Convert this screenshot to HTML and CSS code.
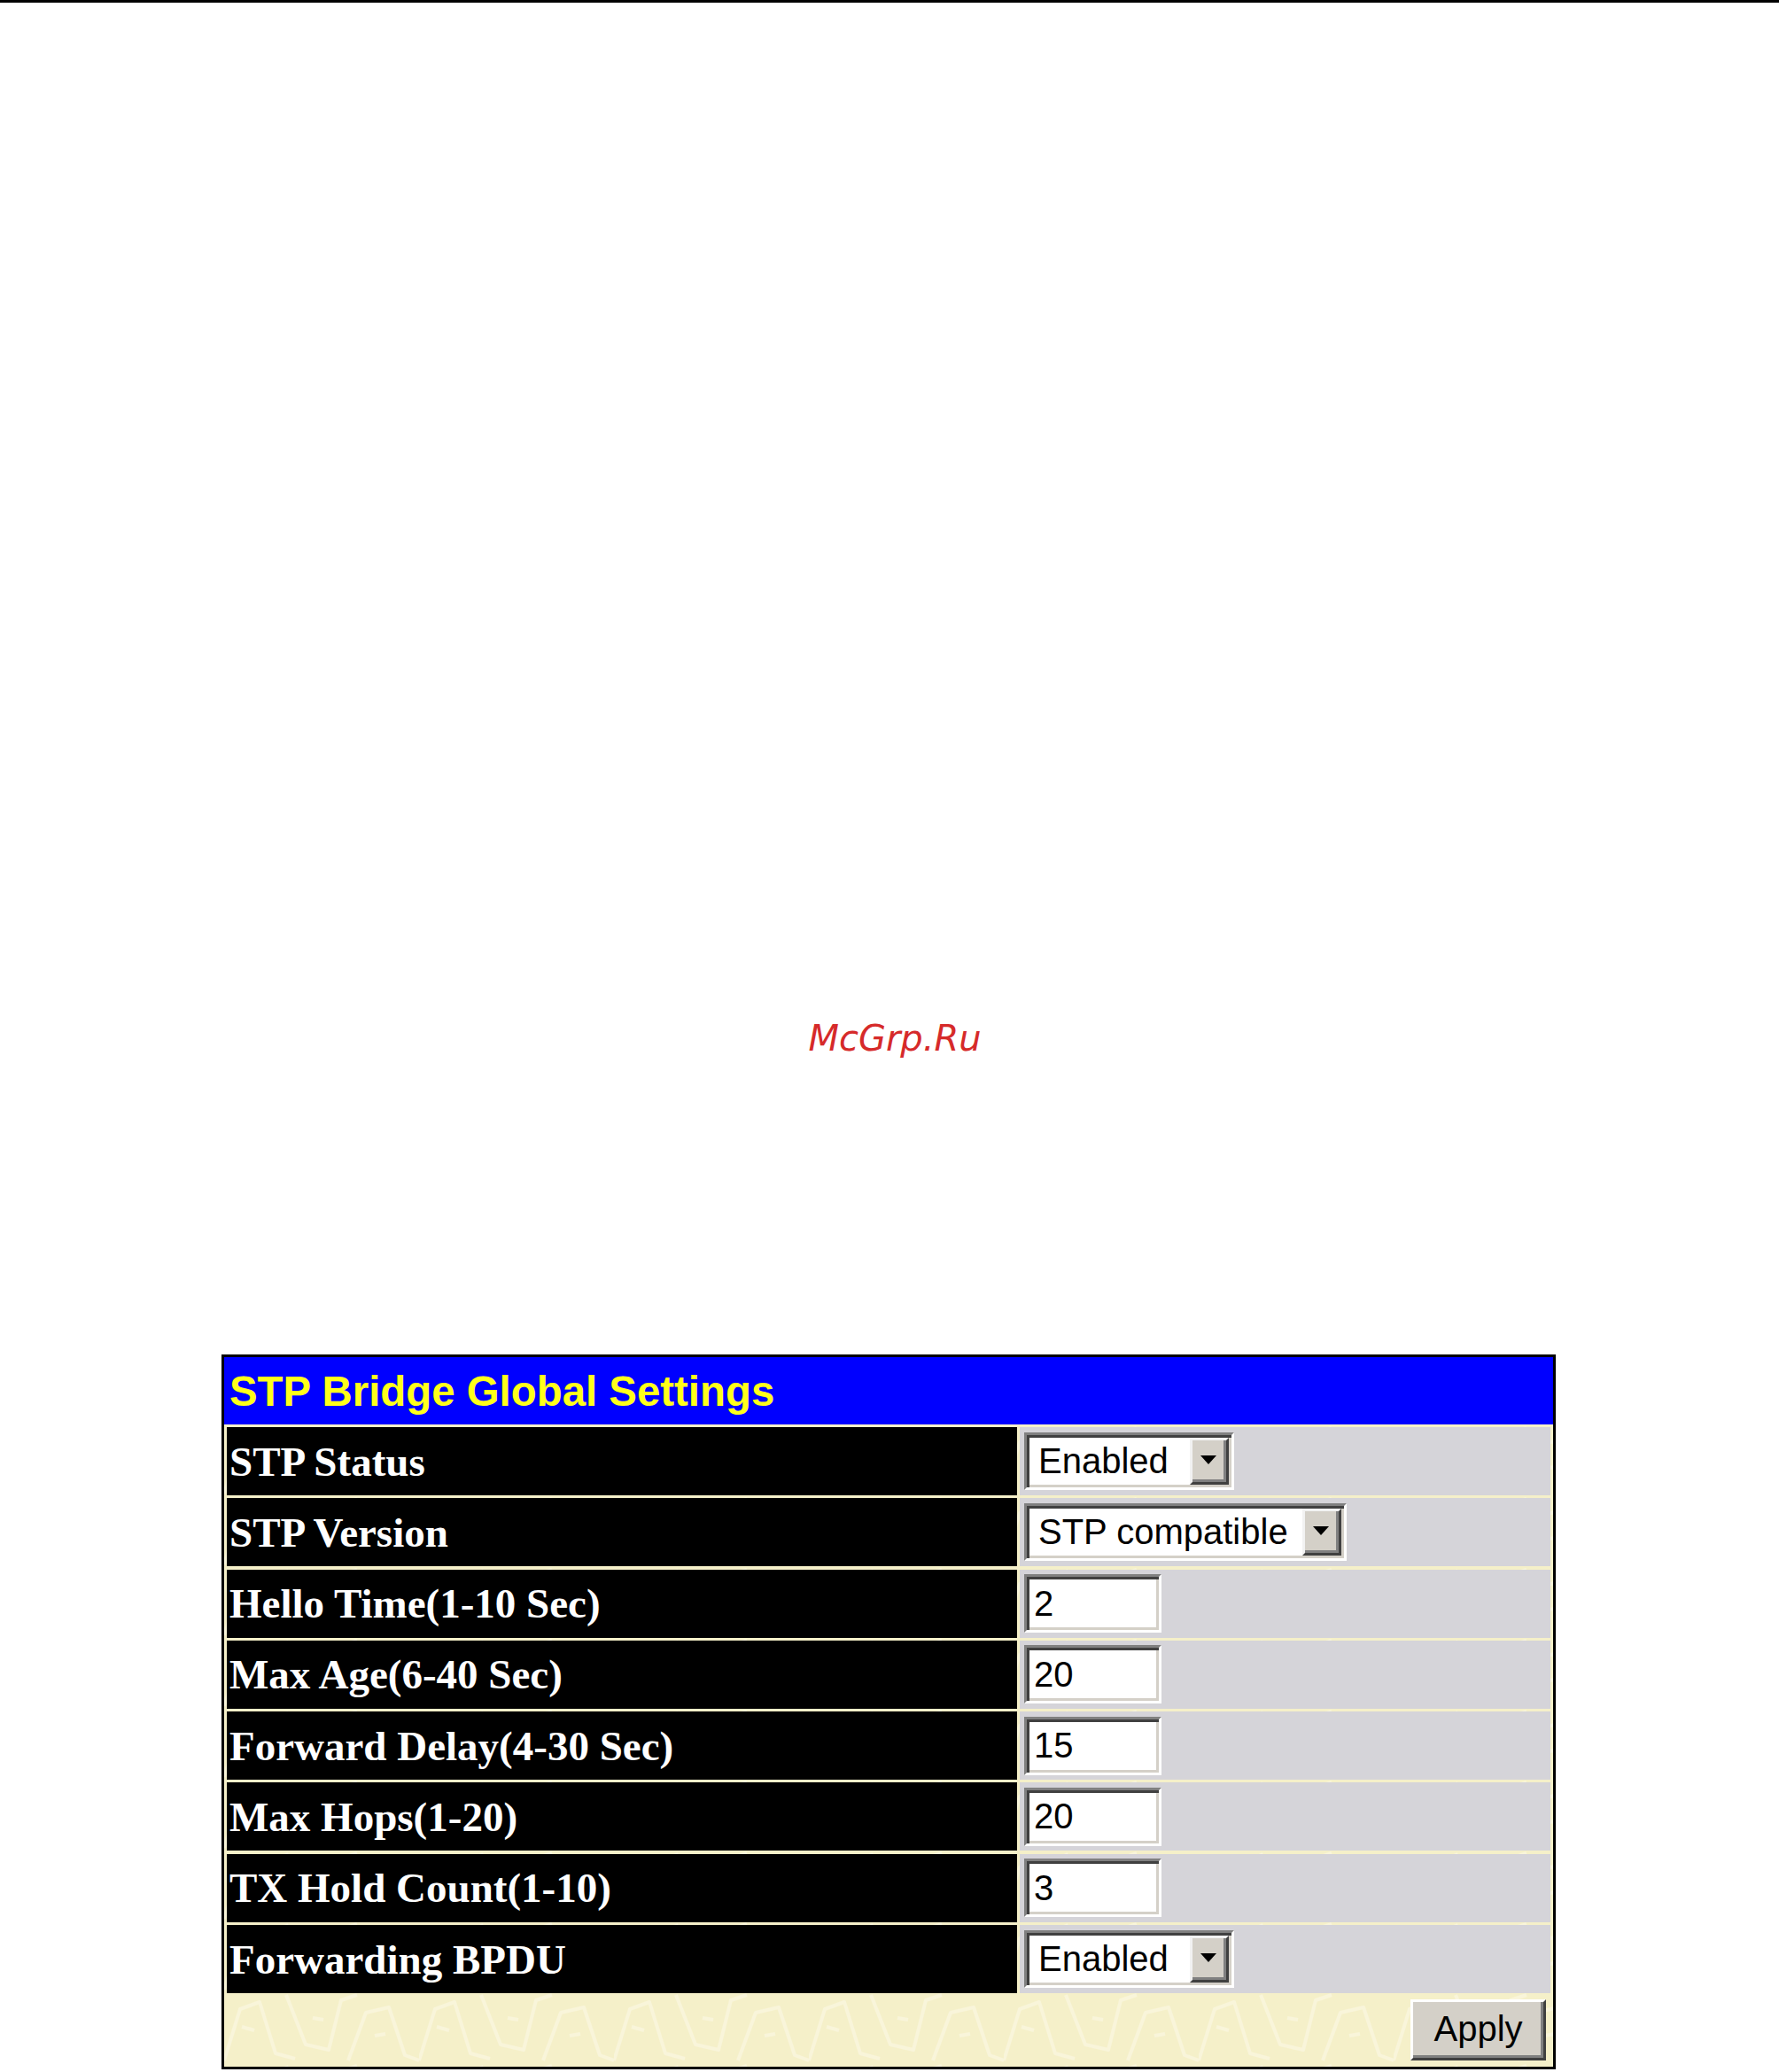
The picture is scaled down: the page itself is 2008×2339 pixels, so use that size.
FILE: index.html
```html
<!DOCTYPE html>
<html>
<head>
<meta charset="utf-8">
<title>STP Bridge Global Settings</title>
<link rel="stylesheet" href="styles.css">
</head>
<body>
<div class="topline"></div>
<div class="watermark">McGrp.Ru</div>
<section class="panel">
  <div class="panel-head">STP Bridge Global Settings</div>
  <div class="panel-body">
    <div class="row">
      <div class="label">STP Status</div>
      <div class="value">
        <div class="select sel-short"><span class="sel-text">Enabled</span><span class="sel-btn"><svg width="18" height="10" viewBox="0 0 18 10"><polygon points="0,0 18,0 9,10" fill="#000"/></svg></span></div>
      </div>
    </div>
    <div class="row">
      <div class="label">STP Version</div>
      <div class="value">
        <div class="select sel-long"><span class="sel-text">STP compatible</span><span class="sel-btn"><svg width="18" height="10" viewBox="0 0 18 10"><polygon points="0,0 18,0 9,10" fill="#000"/></svg></span></div>
      </div>
    </div>
    <div class="row">
      <div class="label">Hello Time(1-10 Sec)</div>
      <div class="value"><div class="field">2</div></div>
    </div>
    <div class="row">
      <div class="label">Max Age(6-40 Sec)</div>
      <div class="value"><div class="field">20</div></div>
    </div>
    <div class="row">
      <div class="label">Forward Delay(4-30 Sec)</div>
      <div class="value"><div class="field">15</div></div>
    </div>
    <div class="row">
      <div class="label">Max Hops(1-20)</div>
      <div class="value"><div class="field">20</div></div>
    </div>
    <div class="row">
      <div class="label">TX Hold Count(1-10)</div>
      <div class="value"><div class="field">3</div></div>
    </div>
    <div class="row">
      <div class="label">Forwarding BPDU</div>
      <div class="value">
        <div class="select sel-short"><span class="sel-text">Enabled</span><span class="sel-btn"><svg width="18" height="10" viewBox="0 0 18 10"><polygon points="0,0 18,0 9,10" fill="#000"/></svg></span></div>
      </div>
    </div>
    <div class="foot">
      <button class="apply" type="button">Apply</button>
    </div>
  </div>
</section>
</body>
</html>
```
FILE: styles.css
```css
html, body {
  margin: 0;
  padding: 0;
  background: #ffffff;
}

.topline {
  height: 3px;
  background: #000000;
}

.watermark {
  margin-top: 1145px;
  height: 48px;
  line-height: 48px;
  padding-left: 12px;
  text-align: center;
  font-family: "DejaVu Sans", sans-serif;
  font-style: italic;
  font-size: 40px;
  color: #d62a2a;
}

.panel {
  margin-top: 333px;
  margin-left: 250px;
  width: 1500px;
  border: 3px solid #000000;
}

.panel-head {
  height: 76px;
  background: #0000ff;
  color: #ffff1a;
  display: flex;
  align-items: center;
  padding-left: 6px;
  font-family: "Liberation Sans", Arial, sans-serif;
  font-weight: bold;
  font-size: 47.4px;
}

.panel-body {
  display: grid;
  row-gap: 3.3px;
  padding: 3px 3px 0 3px;
  background-color: #f5f0c9;
  background-image: url("data:image/svg+xml;utf8,<svg xmlns='http://www.w3.org/2000/svg' width='220' height='80'><g fill='none' stroke='%23f9f5da' stroke-width='4' stroke-linejoin='round'><path d='M0 78 L18 20 L40 12 L58 70 L80 76'/><path d='M70 4 L92 60 L118 66 L132 10 L150 4'/><path d='M140 78 L160 24 L186 18 L204 72 L220 78'/><path d='M20 40 L34 44 M100 30 L112 32 M170 50 L182 48'/></g></svg>");
}

.row {
  display: grid;
  grid-template-columns: 892px 599px;
  column-gap: 3px;
  height: 77px;
}

.label {
  background: #000000;
  color: #ffffff;
  display: flex;
  align-items: center;
  padding-left: 3px;
  font-family: "Liberation Serif", "Times New Roman", serif;
  font-weight: bold;
  font-size: 47px;
  white-space: nowrap;
}

.value {
  background: #d5d4d9;
  display: flex;
  align-items: center;
  padding-left: 5px;
}

.select,
.field {
  box-sizing: border-box;
  height: 65px;
  background: #ffffff;
  border: 3px solid;
  border-color: #808080 #ffffff #ffffff #808080;
  box-shadow: inset 3px 3px 0 #404040, inset -3px -3px 0 #d4d0c8;
  padding: 3px;
  display: flex;
  align-items: center;
  font-family: "Liberation Sans", Arial, sans-serif;
  font-size: 40px;
  color: #000000;
}

.sel-short { width: 237px; }
.sel-long { width: 364px; }

.sel-text {
  flex: 1;
  padding-left: 10px;
  white-space: nowrap;
}

.sel-btn {
  box-sizing: border-box;
  width: 44px;
  height: 100%;
  background: #d4d0c8;
  border-style: solid;
  border-width: 3px;
  border-color: #f2f2f2 #404040 #404040 #f2f2f2;
  box-shadow: inset -3px -3px 0 #808080;
  display: flex;
  align-items: center;
  justify-content: center;
}

.sel-btn svg {
  display: block;
  margin: 0 3px 3px 0;
}

.field {
  width: 155px;
  height: 66px;
  padding-left: 8px;
}

.foot {
  height: 80px;
  display: flex;
  justify-content: flex-end;
  align-items: flex-start;
  padding: 4px 5px 0 0;
  box-sizing: border-box;
}

.apply {
  box-sizing: border-box;
  width: 153px;
  height: 69px;
  background: #d4d0c8;
  border-style: solid;
  border-width: 3px;
  border-color: #ffffff #404040 #404040 #ffffff;
  box-shadow: inset -3px -3px 0 #808080;
  font-family: "Liberation Sans", Arial, sans-serif;
  font-size: 40px;
  color: #000000;
  padding: 0 0 2px 0;
  margin: 0;
}
```
